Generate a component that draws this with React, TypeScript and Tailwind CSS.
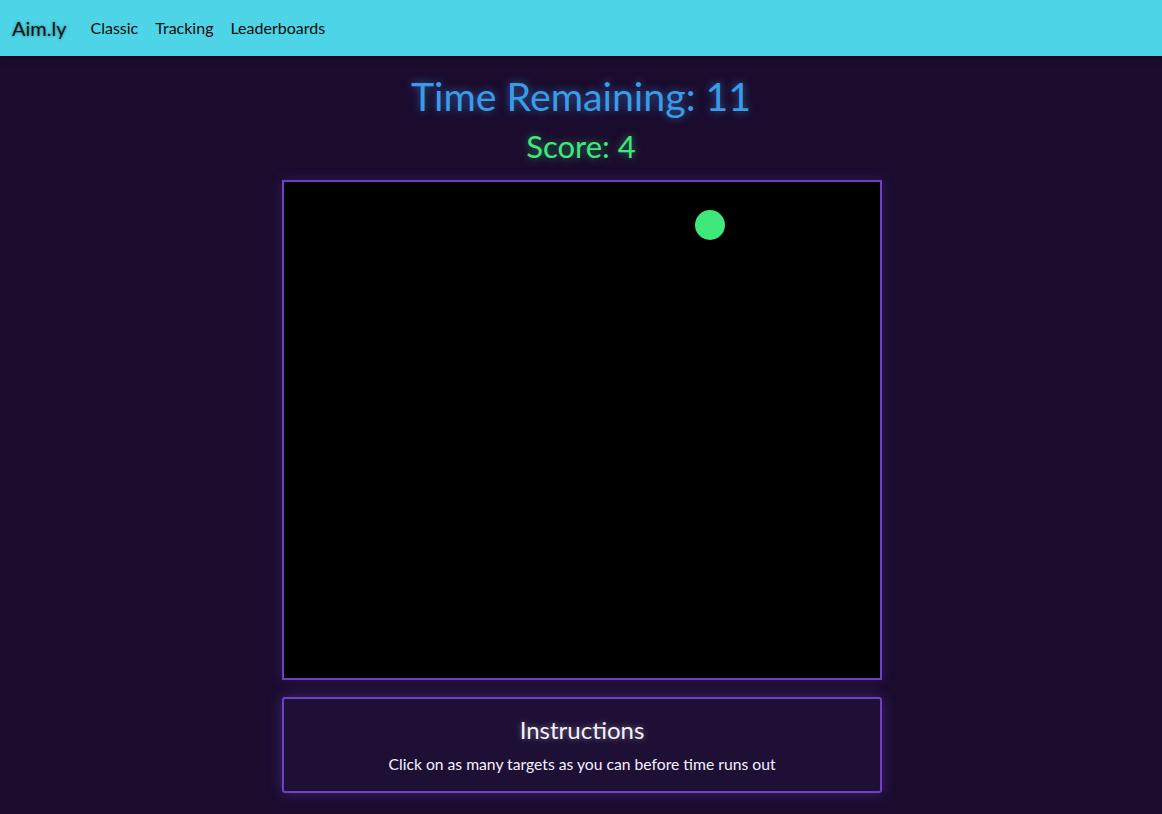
export default function App() {
  return (
    <div className="min-h-[814px] bg-[#1b0c2e] font-['Lato',sans-serif]">
      <nav className="h-[56px] bg-[#4dd4e6] flex items-center px-3 gap-[17px] shadow-[0_2px_6px_rgba(0,0,0,0.5)] relative">
        <span className="text-[20px] text-[#111] mr-[7px] [text-shadow:0_0_3px_rgba(0,0,0,0.45)]">Aim.ly</span>
        <a className="text-[16px] text-[#0d0d0d]">Classic</a>
        <a className="text-[16px] text-[#0d0d0d]">Tracking</a>
        <a className="text-[16px] text-[#0d0d0d]">Leaderboards</a>
      </nav>
      <main className="flex flex-col items-center">
        <h1 className="mt-[16px] text-[39.3px] leading-[48px] text-[#3a9be8] [text-shadow:0_0_8px_rgba(58,155,232,0.6)]">
          Time Remaining: 11
        </h1>
        <h2 className="mt-[8px] text-[31px] leading-[36px] text-[#3ee87a] [text-shadow:0_0_8px_rgba(62,232,122,0.5)]">
          Score: 4
        </h2>
        <div className="mt-[16px] ml-[2px] w-[600px] h-[500px] bg-black border-2 border-[#6f3fc7] relative shadow-[0_0_12px_rgba(111,63,199,0.25)]">
          <div className="absolute left-[411px] top-[28px] w-[30px] h-[30px] rounded-full bg-[#3ee87a]" />
        </div>
        <div className="mt-[17px] ml-[2px] w-[600px] h-[96px] border-2 border-[#6f3fc7] rounded-[3px] bg-[#1e1035] flex flex-col items-center pt-[16px] shadow-[0_0_14px_rgba(111,63,199,0.45)]">
          <h3 className="text-[24px] leading-[30px] text-[#f4f0ff] [text-shadow:0_0_6px_rgba(255,255,255,0.4)]">Instructions</h3>
          <p className="mt-[9px] text-[15.7px] leading-[20px] text-[#f4f0ff]">
            Click on as many targets as you can before time runs out
          </p>
        </div>
      </main>
    </div>
  );
}
